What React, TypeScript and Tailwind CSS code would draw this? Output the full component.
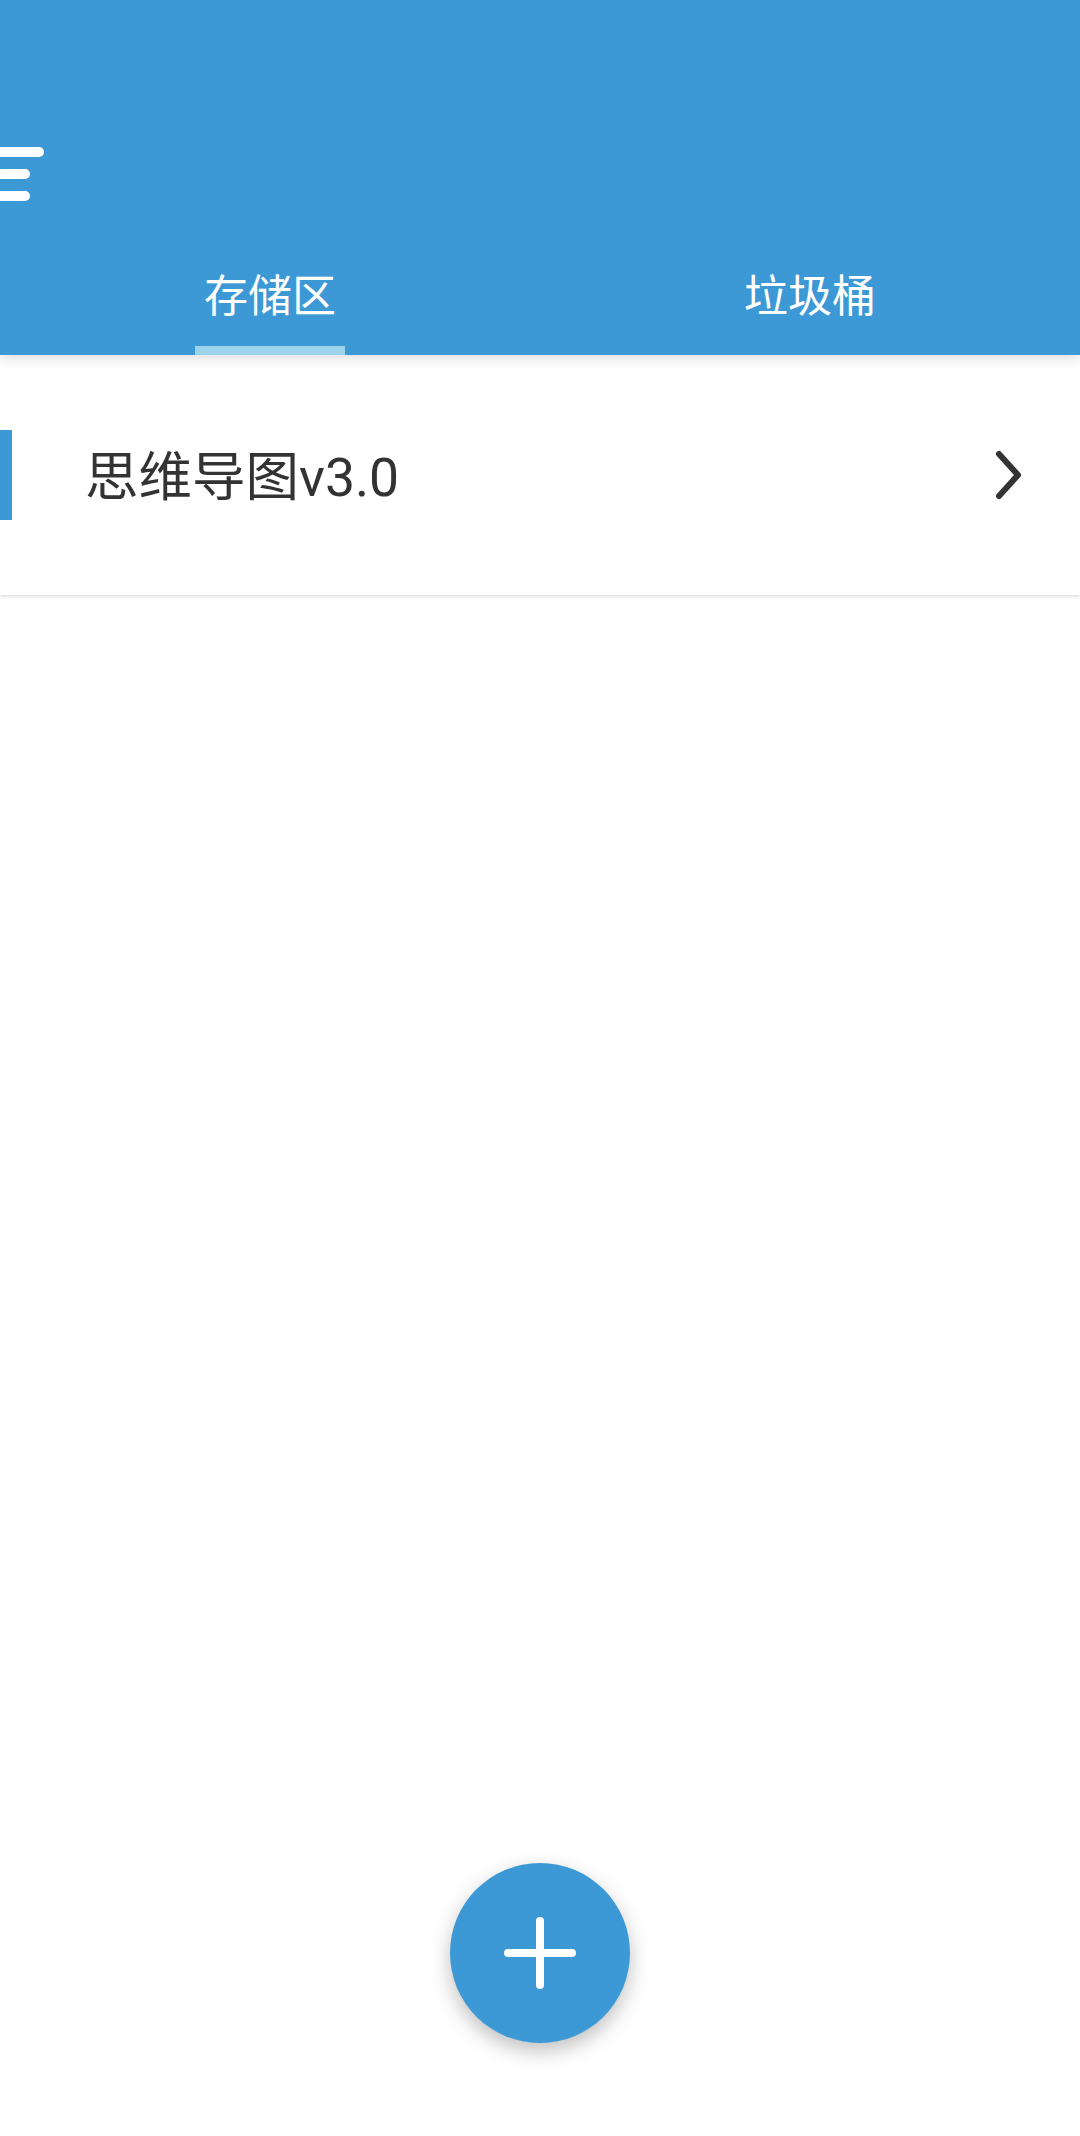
import { useState } from "react";

const tabs = ["存储区", "垃圾桶"];

const App = () => {
  // which tab is selected
  const [active, setActive] = useState(0);

  return (
    <div
      className="relative w-[1080px] h-[2136px] bg-white overflow-hidden"
      style={{ fontFamily: 'Roboto, "Noto Sans CJK SC", sans-serif' }}
    >
      {/* Header */}
      <header className="relative z-10 h-[355px] bg-[#3c99d6] flex flex-col shadow-[0_4px_12px_rgba(0,0,0,0.12)]">
        <button className="mt-[147px] flex flex-col gap-[12px] w-[60px] cursor-pointer">
          <span className="block w-[44px] h-[10px] bg-white rounded-r-[5px]" />
          <span className="block w-[30px] h-[10px] bg-white rounded-r-[5px]" />
          <span className="block w-[30px] h-[10px] bg-white rounded-r-[5px]" />
        </button>

        <nav className="mt-auto grid grid-cols-2">
          {tabs.map((name, i) => (
            <button
              key={name}
              onClick={() => setActive(i)}
              className="flex flex-col items-center cursor-pointer"
            >
              <span className="text-[44px] leading-none text-white">{name}</span>
              <span
                className={`mt-[27px] block w-[150px] h-[9px] ${active === i ? "bg-[#9dd3ea]" : "bg-transparent"}`}
              />
            </button>
          ))}
        </nav>
      </header>

      {/* List */}
      <ul>
        <li className="h-[240px] flex items-center bg-white shadow-[0_2px_3px_rgba(0,0,0,0.12)]">
          <span className="block w-[12px] h-[90px] bg-[#3c99d6]" />
          <span className="ml-[73px] mt-[5px] text-[53.5px] leading-none text-[#333333]">思维导图v3.0</span>
          <svg
            className="ml-auto mr-[54px] w-[34px] h-[52px]"
            viewBox="0 0 34 52"
            fill="none"
            stroke="#333333"
            strokeWidth="6"
            strokeLinecap="round"
            strokeLinejoin="round"
          >
            <path d="M7 5 L26 26 L7 47" />
          </svg>
        </li>
      </ul>

      {/* Floating add button */}
      <button className="absolute left-[450px] top-[1863px] w-[180px] h-[180px] rounded-full bg-[#3c99d6] flex items-center justify-center shadow-[0_8px_20px_rgba(0,0,0,0.25)] cursor-pointer">
        <svg className="w-[72px] h-[72px]" viewBox="0 0 72 72" stroke="white" strokeWidth="8" strokeLinecap="round">
          <path d="M36 4 V68" />
          <path d="M4 36 H68" />
        </svg>
      </button>
    </div>
  );
};

export default App;
